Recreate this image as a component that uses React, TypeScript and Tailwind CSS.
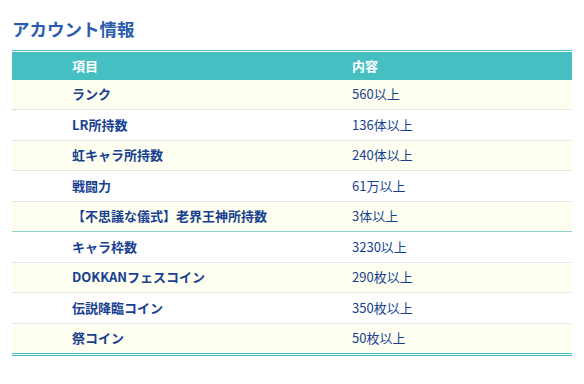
import React from 'react'

type Row = { label: string; value: string; solid?: boolean }

const rows: Row[] = [
  { label: 'ランク', value: '560以上' },
  { label: 'LR所持数', value: '136体以上' },
  { label: '虹キャラ所持数', value: '240体以上' },
  { label: '戦闘力', value: '61万以上' },
  { label: '【不思議な儀式】老界王神所持数', value: '3体以上', solid: true },
  { label: 'キャラ枠数', value: '3230以上' },
  { label: 'DOKKANフェスコイン', value: '290枚以上' },
  { label: '伝説降臨コイン', value: '350枚以上' },
  { label: '祭コイン', value: '50枚以上' },
]

// row heights incl. bottom border, keeps lines on whole pixels
const heights = ['h-[30px]', 'h-[31px]', 'h-[30px]', 'h-[31px]', 'h-[30px]', 'h-[31px]', 'h-[30px]', 'h-[31px]', 'h-[28px]']

export default function App() {
  return (
    <div
      className="w-[584px] h-[384px] bg-white px-[12px] pt-[18px]"
      style={{ fontFamily: '"Noto Sans CJK JP", "Noto Sans", sans-serif' }}
    >
      <h2 className="text-[17.5px] font-bold text-[#2a5db0] leading-[22px] h-[32px]">アカウント情報</h2>

      <div className="border-t border-[#45bfc2] pt-[1px]">
        <div className="grid grid-cols-2 h-[28px] items-center bg-[#45bfc2] text-white text-[13px] font-bold">
          <div className="pl-[60px]">項目</div>
          <div className="pl-[60px]">内容</div>
        </div>
        {rows.map((row, i) => {
          const isLast = i === rows.length - 1
          const border = isLast
            ? ''
            : row.solid
              ? 'border-b border-solid border-[#8fd3d3]'
              : 'border-b border-dotted border-[#c8d8d8]'
          return (
            <div
              key={i}
              className={`grid grid-cols-2 items-center ${heights[i]} pb-[1px] text-[13px] text-[#173f92] ${i % 2 === 0 ? 'bg-[#fefff0]' : 'bg-white'} ${border}`}
            >
              <div className="pl-[60px] font-bold">{row.label}</div>
              <div className="pl-[60px]">{row.value}</div>
            </div>
          )
        })}
        <div className="h-px bg-[#3fc0c4] mt-px" />
        <div className="h-px bg-white" />
        <div className="h-px bg-[#3fc0c4]" />
      </div>
    </div>
  )
}
